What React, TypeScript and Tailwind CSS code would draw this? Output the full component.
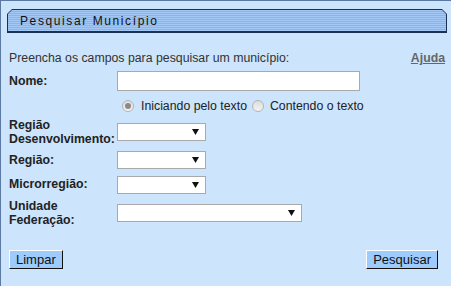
import React from "react";

function Select({ width }: { width: string }) {
  return (
    <div className={`${width} h-[18px] bg-white border border-[#a9a9a9] flex items-center justify-end pr-[6px]`}>
      <svg width="7" height="6" viewBox="0 0 7 6">
        <path d="M0 0 H7 L3.5 6 Z" fill="#111" />
      </svg>
    </div>
  );
}

function Radio({ checked }: { checked?: boolean }) {
  return (
    <span className="w-[12px] h-[12px] rounded-full border border-[#b4b4b4] bg-[linear-gradient(#dcdcdc,#f4f4f4)] flex items-center justify-center">
      {checked && <span className="w-[6px] h-[6px] rounded-full bg-[#8a8a8a]" />}
    </span>
  );
}

function Btn({ label }: { label: string }) {
  return (
    <button className="h-[19px] px-[6px] bg-[#9ccbfc] text-[13px] leading-[15px] text-[#111] border border-t-white border-l-white border-r-[#111] border-b-[#111]">
      {label}
    </button>
  );
}

export default function App() {
  return (
    <div className="w-[451px] h-[286px] bg-[#cce4fc] border-l border-t border-[#5b7aa3] font-['Liberation_Sans',Arial,sans-serif] text-[12.3px] text-[#222] flex flex-col">
      {/* Header tab */}
      <div className="mt-[8px] ml-[6px] mr-[4px] h-[24px] bg-[#1c2f55] [clip-path:polygon(5px_0,calc(100%-5px)_0,100%_5px,100%_100%,0_100%,0_5px)] p-[1px] pb-[2px]">
        <div className="h-full bg-[repeating-linear-gradient(180deg,#a3c8f5_0px,#a3c8f5_1px,#8ab5ec_1px,#8ab5ec_2px)] [clip-path:polygon(4px_0,calc(100%-4px)_0,100%_4px,100%_100%,0_100%,0_4px)] flex items-center pl-[12px] tracking-[1.6px] text-[#111] text-[12px]">
          Pesquisar Município
        </div>
      </div>

      <div className="pl-[8px] pr-[6px] flex flex-col">
        <div className="mt-[18px] h-[14px] leading-[14px] flex justify-between text-[#333]">
          <span>Preencha os campos para pesquisar um município:</span>
          <span className="font-bold text-[#666] underline">Ajuda</span>
        </div>

        <div className="mt-[6px] flex items-center">
          <span className="w-[108px] font-bold">Nome:</span>
          <div className="w-[243px] h-[20px] bg-white border border-[#a9a9a9]" />
        </div>

        <div className="mt-[8px] h-[14px] flex items-center pl-[113px] text-[#222]">
          <Radio checked />
          <span className="ml-[7px]">Iniciando pelo texto</span>
          <span className="ml-[5px]"><Radio /></span>
          <span className="ml-[6px]">Contendo o texto</span>
        </div>

        <div className="mt-[5px] flex items-center">
          <span className="w-[108px] font-bold leading-[14px]">Região<br />Desenvolvimento:</span>
          <Select width="w-[89px]" />
        </div>

        <div className="mt-[5px] flex items-center">
          <span className="w-[108px] font-bold">Região:</span>
          <Select width="w-[89px]" />
        </div>

        <div className="mt-[6px] flex items-center">
          <span className="w-[108px] font-bold">Microrregião:</span>
          <Select width="w-[89px]" />
        </div>

        <div className="mt-[5px] flex items-center">
          <span className="w-[108px] font-bold leading-[14px]">Unidade<br />Federação:</span>
          <Select width="w-[185px]" />
        </div>

        <div className="mt-[23px] flex justify-between pr-[7px]">
          <Btn label="Limpar" />
          <Btn label="Pesquisar" />
        </div>
      </div>
    </div>
  );
}
